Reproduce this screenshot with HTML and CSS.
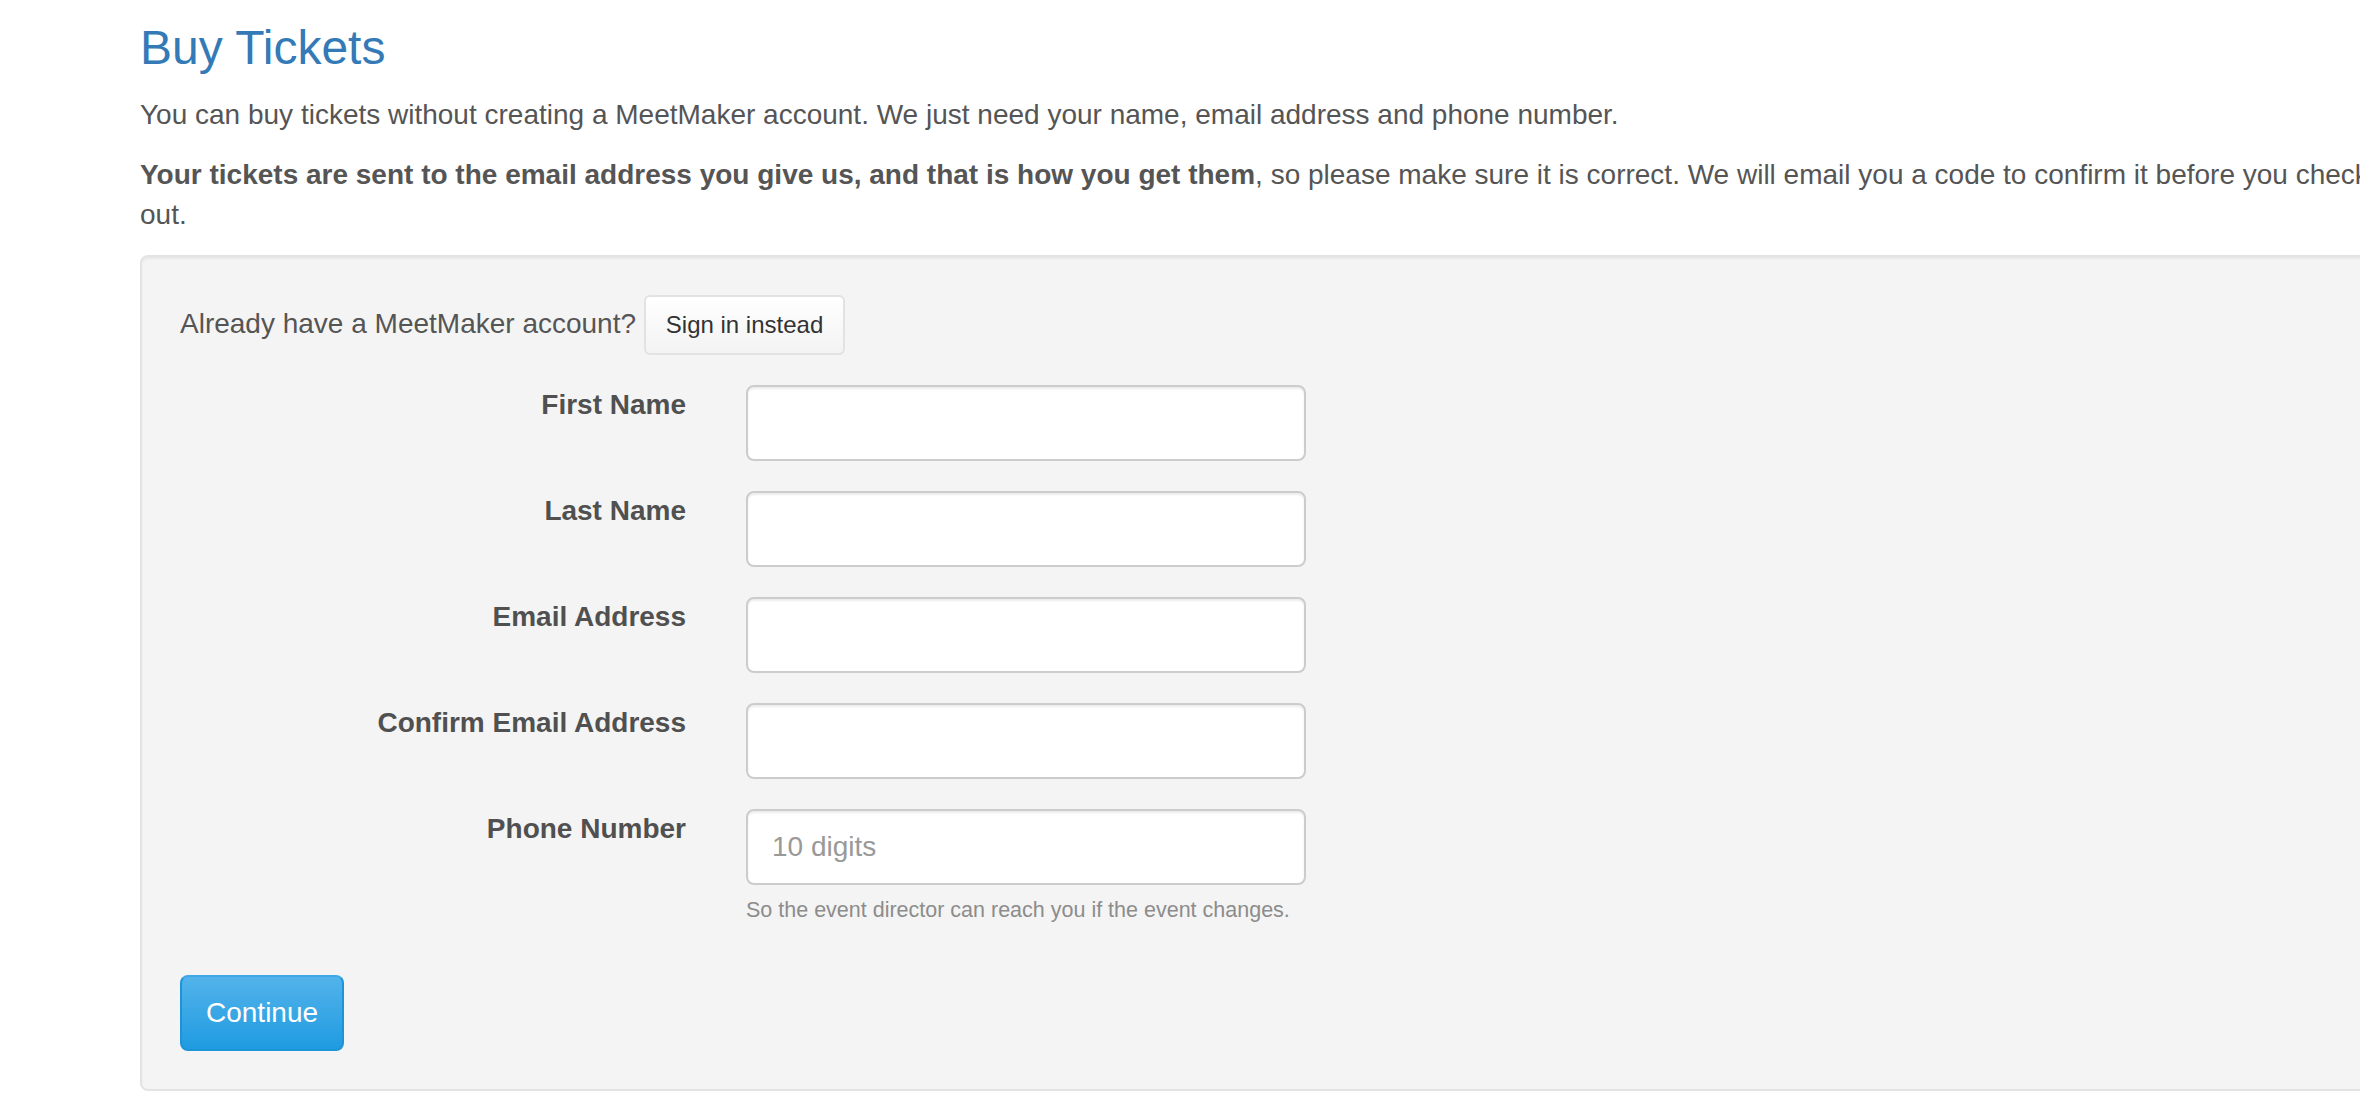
FILE: index.html
```html
<!DOCTYPE html>
<html lang="en">
<head>
<meta charset="utf-8">
<title>Buy Tickets</title>
<link rel="stylesheet" href="styles.css">
</head>
<body>
<div class="container">
  <h1 class="page-title">Buy Tickets</h1>
  <p class="lead-text">You can buy tickets without creating a MeetMaker account. We just need your name, email address and phone number.</p>
  <p class="lead-text"><strong>Your tickets are sent to the email address you give us, and that is how you get them</strong>, so please make sure it is correct. We will email you a code to confirm it before you check out.</p>

  <form class="well">
    <p class="signin-line">Already have a MeetMaker account? <button type="button" class="btn-default">Sign in instead</button></p>

    <div class="form-grid">
      <label class="control-label" for="fn">First Name</label>
      <div class="field"><input class="form-control" id="fn" type="text"></div>

      <label class="control-label" for="ln">Last Name</label>
      <div class="field"><input class="form-control" id="ln" type="text"></div>

      <label class="control-label" for="em">Email Address</label>
      <div class="field"><input class="form-control" id="em" type="email"></div>

      <label class="control-label" for="cem">Confirm Email Address</label>
      <div class="field"><input class="form-control" id="cem" type="email"></div>

      <label class="control-label" for="ph">Phone Number</label>
      <div class="field">
        <input class="form-control" id="ph" type="tel" placeholder="10 digits">
        <p class="help-block">So the event director can reach you if the event changes.</p>
      </div>
    </div>

    <button type="button" class="btn-primary">Continue</button>
  </form>
</div>
</body>
</html>
```

FILE: styles.css
```css
html {
  overflow: hidden;
}
body {
  margin: 0;
  font-family: "Liberation Sans", Arial, Helvetica, sans-serif;
  font-size: 28px;
  line-height: 40px;
  color: #555;
  background: #fff;
}
.container {
  padding-left: 140px;
  width: 2280px;
}
.page-title {
  margin: 22px 0 20px;
  font-size: 48px;
  line-height: 1.1;
  font-weight: normal;
  color: #337ab7;
}
.lead-text {
  margin: 0 0 20px;
}
.lead-text strong {
  font-weight: bold;
}
.well {
  display: block;
  margin: 0;
  padding: 38px;
  background: #f4f4f4;
  border: 2px solid #e3e3e3;
  border-radius: 8px;
  box-shadow: inset 0 2px 2px rgba(0, 0, 0, 0.05);
}
.signin-line {
  margin: 0 0 30px;
}
.btn-default {
  font-family: inherit;
  font-size: 24px;
  line-height: 36px;
  padding: 10px 20px;
  color: #333;
  background: linear-gradient(#ffffff, #f3f3f3);
  border: 2px solid #e2e2e2;
  border-radius: 6px;
  vertical-align: baseline;
}
.form-grid {
  display: grid;
  grid-template-columns: 506px 560px;
  column-gap: 60px;
  row-gap: 30px;
  margin-bottom: 30px;
}
.control-label {
  text-align: right;
  font-weight: bold;
  color: #505050;
  padding-top: 0;
}
.form-control {
  display: block;
  box-sizing: border-box;
  width: 560px;
  height: 76px;
  margin: 0;
  padding: 12px 24px;
  font-family: inherit;
  font-size: 28px;
  line-height: 40px;
  color: #555;
  background: #fff;
  border: 2px solid #ccc;
  border-radius: 8px;
  box-shadow: inset 0 2px 2px rgba(0, 0, 0, 0.075);
}
.form-control::placeholder {
  color: #999;
}
.help-block {
  margin: 10px 0 20px;
  font-size: 21.5px;
  line-height: 30px;
  color: #8c8c8c;
}
.btn-primary {
  display: block;
  font-family: inherit;
  font-size: 28px;
  line-height: 40px;
  padding: 16px 24px;
  color: #fff;
  background: linear-gradient(#53b3ea, #1f9be1);
  border: 2px solid #1d93d8;
  border-top-color: #3fa8e6;
  border-radius: 8px;
}
```
